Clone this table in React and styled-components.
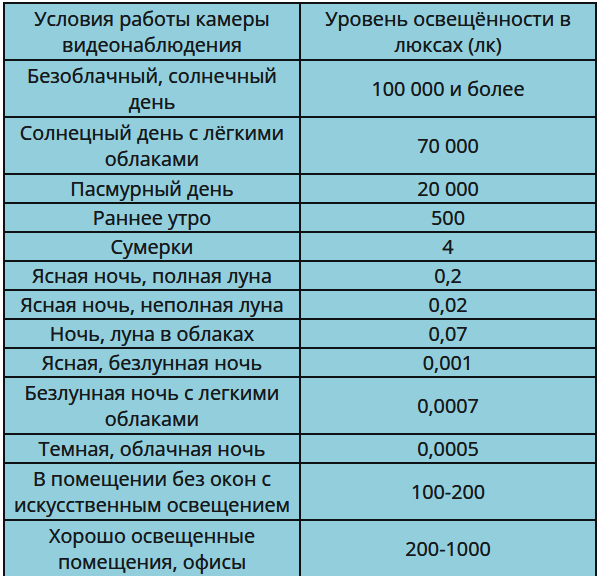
import React from 'react';
import styled, { createGlobalStyle } from 'styled-components';

const GlobalStyle = createGlobalStyle`
  html, body {
    margin: 0;
    padding: 0;
    background: #ffffff;
  }
`;

const Page = styled.div`
  padding: 2px 3px 0 3px;
  width: 600px;
  box-sizing: border-box;
`;

const Table = styled.table`
  width: 594px;
  border-collapse: collapse;
  table-layout: fixed;
  background: #93cedc;
  font-family: "Open Sans", "Noto Sans", sans-serif;
  font-size: 19.8px;
  color: #15191b;
`;

const Row = styled.tr`
  height: ${p => (p.double ? '57px' : '29px')};
`;

const Cell = styled.td`
  border: 2px solid #0e1214;
  text-align: center;
  vertical-align: middle;
  padding: 0 2px;
  line-height: 26px;
  text-shadow: 0 0 0.4px #15191b;
`;

const rows = [
  ['Условия работы камеры видеонаблюдения', 'Уровень освещённости в люксах (лк)', true],
  ['Безоблачный, солнечный день', '100 000 и более', true],
  ['Солнецный день с лёгкими облаками', '70 000', true],
  ['Пасмурный день', '20 000'],
  ['Раннее утро', '500'],
  ['Сумерки', '4'],
  ['Ясная ночь, полная луна', '0,2'],
  ['Ясная ночь, неполная луна', '0,02'],
  ['Ночь, луна в облаках', '0,07'],
  ['Ясная, безлунная ночь', '0,001'],
  ['Безлунная ночь с легкими облаками', '0,0007', true],
  ['Темная, облачная ночь', '0,0005'],
  ['В помещении без окон с искусственным освещением', '100-200', true],
  ['Хорошо освещенные помещения, офисы', '200-1000', true],
];

export default function App() {
  return (
    <Page>
      <GlobalStyle />
      <Table>
        <tbody>
          {rows.map(([a, b, d], i) => (
            <Row key={i} double={d}>
              <Cell>{a}</Cell>
              <Cell>{b}</Cell>
            </Row>
          ))}
        </tbody>
      </Table>
    </Page>
  );
}
